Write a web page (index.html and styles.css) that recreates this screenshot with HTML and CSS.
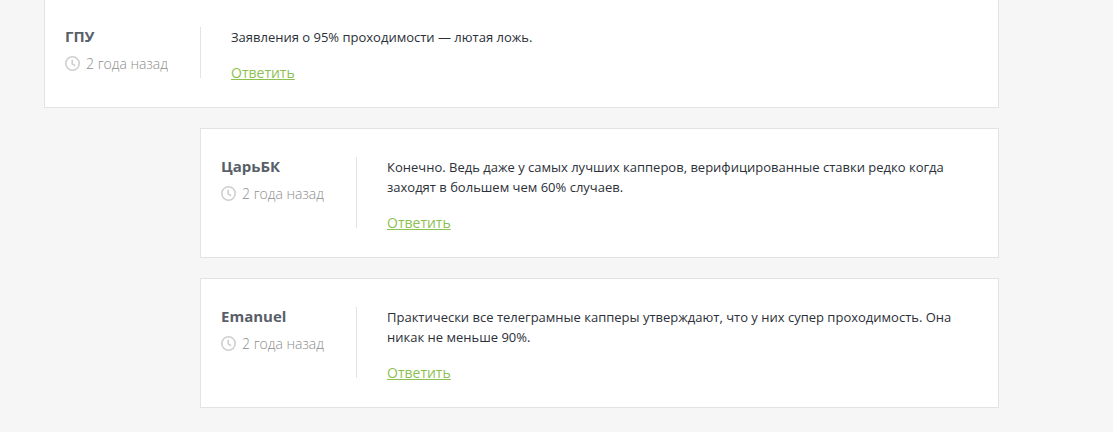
FILE: index.html
```html
<!DOCTYPE html>
<html lang="ru">
<head>
  <meta charset="UTF-8">
  <meta name="viewport" content="width=device-width, initial-scale=1">
  <title>Комментарии</title>
  <link rel="stylesheet" href="styles.css">
</head>
<body>

<!-- clock icon shared by all comments -->
<svg class="sprite" width="0" height="0" aria-hidden="true">
  <symbol id="clock" viewBox="0 0 16 16">
    <circle cx="7.5" cy="7.5" r="6.7"/>
    <path d="M7.2 3.7v4.2l3 1.8"/>
  </symbol>
</svg>

<main class="comments">
  <article class="comment comment-first">
    <div class="comment-side">
      <h3 class="author">ГПУ</h3>
      <div class="date"><svg class="clock"><use href="#clock"/></svg><time>2 года назад</time></div>
    </div>
    <div class="comment-body">
      <p>Заявления о 95% проходимости — лютая ложь.</p>
      <a class="reply-link" href="#">Ответить</a>
    </div>
  </article>

  <div class="replies">
    <article class="comment">
      <div class="comment-side">
        <h3 class="author">ЦарьБК</h3>
        <div class="date"><svg class="clock"><use href="#clock"/></svg><time>2 года назад</time></div>
      </div>
      <div class="comment-body">
        <p>Конечно. Ведь даже у самых лучших капперов, верифицированные ставки редко когда заходят в большем чем 60% случаев.</p>
        <a class="reply-link" href="#">Ответить</a>
      </div>
    </article>

    <article class="comment">
      <div class="comment-side">
        <h3 class="author">Emanuel</h3>
        <div class="date"><svg class="clock"><use href="#clock"/></svg><time>2 года назад</time></div>
      </div>
      <div class="comment-body">
        <p>Практически все телеграмные капперы утверждают, что у них супер проходимость. Она никак не меньше 90%.</p>
        <a class="reply-link" href="#">Ответить</a>
      </div>
    </article>
  </div>
</main>

</body>
</html>
```
FILE: styles.css
```css
* {
  box-sizing: border-box;
}

body {
  margin: 0;
  background: #f6f6f6;
  color: #2c3038;
  font: 14px/20px "Open Sans", "Noto Sans", sans-serif;
}

.sprite {
  display: block;
}

.comments {
  padding: 0 114px 24px 44px;
}

.comment {
  display: flex;
  margin-bottom: 20px;
  padding: 28px 20px 24px;
  background: #fff;
  border: 1px solid #e3e3e3;
}

.comment-first {
  padding-top: 27px;
  border-top: 0;
}

.replies {
  margin-left: 156px;
}

.comment-side {
  flex: none;
  width: 136px;
  margin-bottom: 5px;
  border-right: 1px solid #e3e3e3;
}

.author {
  margin: 0 0 9px;
  color: #595f69;
  font-size: 15px;
  line-height: 18px;
  font-weight: 700;
}

.date {
  display: flex;
  align-items: center;
  gap: 5px;
  color: #8e8e8e;
  font-weight: 300;
}

.clock {
  width: 16px;
  height: 16px;
  fill: none;
  stroke: #cfcfcf;
  stroke-width: 1.6;
}

.comment-body {
  flex: 1;
  padding-left: 30px;
}

.comment-body p {
  margin: 0 0 16px;
  font-size: 13px;
}

.reply-link {
  display: block;
  width: fit-content;
  color: #8cc152;
  text-decoration: underline;
}
```
